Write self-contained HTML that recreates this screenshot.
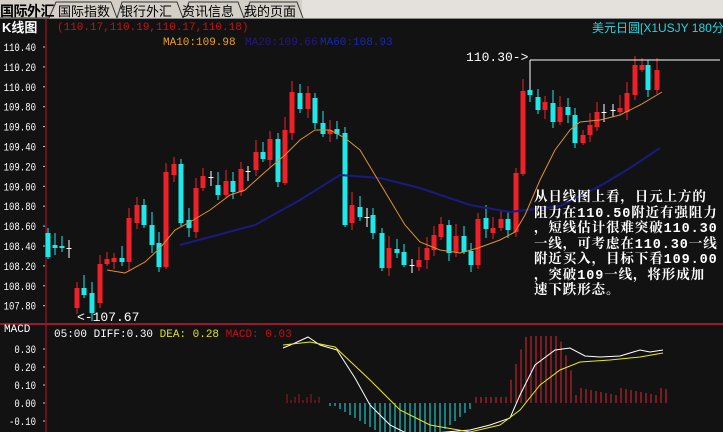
<!DOCTYPE html><html><head><meta charset="utf-8"><style>
body{margin:0;width:723px;height:432px;overflow:hidden;background:#121212;font-family:"Liberation Sans","Noto Sans CJK SC",sans-serif}
.t{position:absolute;white-space:nowrap}
</style></head><body>
<div style="position:absolute;left:0;top:0;width:723px;height:18px;background:#e4e1dc;border-bottom:1px solid #888"></div>
<div style="position:absolute;left:0;top:0;width:302px;height:18px;background:#d4d0c8"></div>
<svg style="position:absolute;left:0;top:0" width="723" height="19"><g stroke="#333" fill="none" stroke-width="1"><path d="M49 18 L56 2 L111 2 M111 2 L117 18 M117 18 L122 2 L177 2 L183 18 M183 18 L189 2 L238 2 L244 18 M244 18 L250 2 L297 2 L303 18 M49 18 L0 18"/></g></svg>
<div class="t" style="left:0;top:1px;font-size:14px;font-weight:bold;color:#000;letter-spacing:-0.5px">国际外汇</div>
<div class="t" style="left:58px;top:1px;font-size:13px;color:#000">国际指数</div>
<div class="t" style="left:120px;top:1px;font-size:13px;color:#000">银行外汇</div>
<div class="t" style="left:182px;top:1px;font-size:13px;color:#000">资讯信息</div>
<div class="t" style="left:244px;top:1px;font-size:13px;color:#000">我的页面</div>
<div class="t" style="left:2px;top:17px;font-size:13px;font-weight:bold;color:#fff">K线图</div>
<div class="t" style="left:57px;top:22px;font-size:11px;color:#c0141c;font-family:'Liberation Mono',monospace">(110.17,110.19,110.17,110.18)</div>
<div class="t" style="left:163px;top:37px;font-size:11px;color:#f0a020;font-family:'Liberation Mono',monospace">MA10:109.98</div>
<div class="t" style="left:245px;top:37px;font-size:11px;color:#281880;font-family:'Liberation Mono',monospace">MA20:109.66</div>
<div class="t" style="left:320px;top:37px;font-size:11px;color:#1828b0;font-family:'Liberation Mono',monospace">MA60:108.93</div>
<div class="t" style="left:592px;top:19px;font-size:12px;color:#20d8e0">美元日圆[X1USJY 180分钟</div>
<svg id="s" style="position:absolute;left:0;top:0" width="723" height="432"></svg>
<div class="t" style="left:466px;top:50px;font-size:13px;color:#fff;font-family:'Liberation Mono',monospace">110.30-&gt;</div>
<div class="t" style="left:77px;top:310px;font-size:13px;color:#fff;font-family:'Liberation Mono',monospace">&lt;-107.67</div>
<div class="t" style="left:534px;top:191px;font-size:13.5px;line-height:15.5px;font-weight:bold;color:#fff;letter-spacing:0.9px;font-family:'Liberation Mono','Noto Serif CJK SC',serif;white-space:pre">从日线图上看，日元上方的
阻力在110.50附近有强阻力
，短线估计很难突破110.30
一线，可考虑在110.30一线
附近买入，目标下看109.00
，突破109一线，将形成加
速下跌形态。</div>
<div class="t" style="left:4px;top:324px;font-size:11px;color:#fff;font-family:'Liberation Mono',monospace">MACD</div>
<div class="t" style="left:54px;top:329px;font-size:11px;font-family:'Liberation Mono',monospace;color:#fff">05:00 DIFF:0.30 <span style="color:#e0e020">DEA: 0.28</span> <span style="color:#c01018">MACD: 0.03</span></div>
<script>
var s=document.getElementById('s'),h='';
function L(x1,y1,x2,y2,c,w){h+='<line x1="'+x1+'" y1="'+y1+'" x2="'+x2+'" y2="'+y2+'" stroke="'+c+'" stroke-width="'+(w||1)+'"/>';}
function T(x,y,t,c){h+='<text x="'+x+'" y="'+y+'" fill="'+(c||'#fff')+'" font-size="11" font-family="Liberation Mono,monospace" text-anchor="end" textLength="'+(t.length*5.4)+'" lengthAdjust="spacingAndGlyphs">'+t+'</text>';}
L(46,19,46,432,'#6a1020',2);L(0,324,723,324,'#9a1830',2);
var lab=['110.40','110.20','110.00','109.80','109.60','109.40','109.20','109.00','108.80','108.60','108.40','108.20','108.00','107.80'];
lab.forEach(function(t,i){var y=47+i*19.9;T(36,y+4,t);L(43,y,45,y,'#ccc');});
[['0.30',349],['0.20',367],['0.10',385],['0.00',403],['-0.10',421]].forEach(function(a){T(36,a[1]+4,a[0]);L(43,a[1],45,a[1],'#ccc');});
var R='#f02028',C='#20e8e8';
var cd=[[48,233,257,C],[55,245,248,C],[62,246,248,C],[69,248,249,'#fff'],[77,288,308,R],[84,288,295,C],[92,293,313,C],[100,264,303,R],[107,259,264,R],[114,258,262,R],[122,258,262,C],[129,218,262,R],[137,205,223,R],[144,205,225,C],[152,225,245,C],[159,243,267,C],[166,172,267,R],[174,164,175,R],[181,164,223,C],[189,220,228,C],[196,188,232,R],[203,176,188,R],[211,177,178,'#fff'],[218,185,195,C],[226,181,195,R],[233,181,192,C],[241,169,192,R],[248,171,172,'#fff'],[256,152,170,R],[263,152,159,C],[270,139,160,R],[278,139,182,C],[285,130,183,R],[292,92,133,R],[300,93,109,C],[308,93,109,R],[315,98,123,C],[323,123,134,C],[330,130,134,R],[337,129,134,C],[345,133,225,C],[352,205,223,R],[360,207,217,C],[367,217,218,'#fff'],[373,215,233,C],[382,233,268,C],[389,248,268,R],[397,249,253,C],[404,252,265,C],[412,265,266,'#fff'],[419,260,267,R],[427,248,260,R],[434,235,250,R],[441,224,237,R],[449,225,253,C],[456,236,252,R],[464,236,252,C],[471,251,265,C],[478,219,265,R],[486,218,229,C],[493,228,233,R],[501,219,228,R],[508,219,230,C],[516,173,232,R],[523,91,174,R],[530,90,95,C],[538,97,110,C],[545,102,110,R],[553,103,122,C],[560,107,122,R],[568,107,115,C],[575,115,143,C],[583,135,143,R],[590,125,135,R],[597,112,127,R],[604,112,113,'#fff'],[613,110,111,'#fff'],[620,108,112,R],[627,93,112,R],[635,65,95,R],[642,65,70,R],[648,65,90,C],[657,70,90,R]];
cd.forEach(function(c,i){var w=5+((i*7)%9);L(c[0],c[1]-w,c[0],c[2]+((i*5)%8)+2,c[3]);h+='<rect x="'+(c[0]-2.5)+'" y="'+c[1]+'" width="5" height="'+Math.max(1,c[2]-c[1])+'" fill="'+c[3]+'"/>';});
function P(pts,c,w){h+='<polyline fill="none" stroke="'+c+'" stroke-width="'+(w||1)+'" points="'+pts+'"/>';}
P('180,245 255,225 300,200 340,175 380,178 420,188 470,205 510,212 560,206 600,186 630,168 660,148','#1a1a80',2);
P('107,270 125,273 145,262 160,248 175,230 190,222 210,210 230,195 245,190 265,172 285,155 300,140 315,130 330,130 345,138 360,150 375,175 390,200 405,225 420,242 440,250 460,253 478,248 500,240 515,232 525,215 540,180 555,150 570,130 580,122 600,120 620,115 640,105 662,92','#e09030',1);
L(530,60,720,60,'#fff');L(530,60,530,90,'#fff');
for(var x=287;x<=322;x+=4)L(x,403,x,403-(3+((x*3)%9)),'#a01828');
for(var x=330;x<=470;x+=5){var d=x<380?(x-330)*0.6:(x<440?30:30-(x-440)*0.8);L(x,403,x,403+Math.max(3,d),C);}
for(var x=476;x<=666;x+=5){var d;if(x<510)d=6;else if(x<575)d=20+60*Math.sin((x-510)/65*Math.PI)*1.1;else d=8+((x*3)%8);L(x,403,x,403-Math.min(d,67),'#e02838');}
P('283,348 295,343 308,337 320,345 337,350 355,378 370,405 390,425 410,435 470,430 490,425 510,418 520,395 535,365 555,350 570,348 585,356 600,357 620,356 640,350 650,352 663,350','#fff',1);
P('283,345 310,342 335,347 370,380 400,410 430,425 470,432 500,425 520,410 540,385 560,370 580,362 610,360 640,357 663,353','#e8e820',1);
s.innerHTML=h;
</script>
</body></html>
